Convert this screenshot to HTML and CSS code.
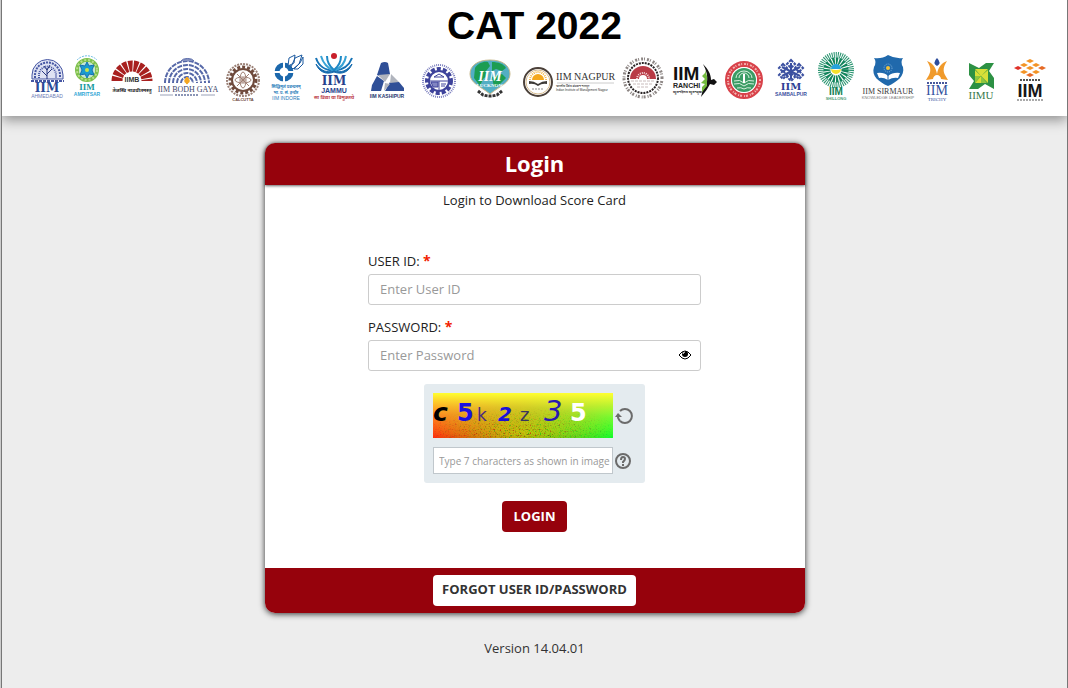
FILE: index.html
```html
<!DOCTYPE html>
<html lang="en">
<head>
    <meta charset="UTF-8">
    <meta name="viewport" content="width=device-width, initial-scale=1.0">
    <title>CAT 2022 - Login</title>
    <link rel="stylesheet" href="styles.css">
</head>
<body>
<header class="banner">
    <h1>CAT 2022</h1>
    <div class="logos">
        <!-- Ahmedabad -->
        <svg width="50" height="60" viewBox="0 0 50 60" fill="none" stroke="#4656a3">
            <path d="M13 31V27a15 15 0 0 1 31 0v4z" fill="#dfe3f3"/>
            <path d="M16 30v-3a12 12 0 0 1 25 0v3" stroke-width="2" stroke-dasharray="2 1"/>
            <path d="M20 30v-3a8 8 0 0 1 17 0v3" stroke-width="2" stroke-dasharray="1 1"/>
            <path d="M28 31V20m0 8l-5-5m5 3l5-5m-5 1l-3-4m3 4l3-5" stroke="#26357f"/>
            <path d="M12 33h33" stroke-width="2" stroke-dasharray="3 1"/>
            <text class="slab" x="28" y="44" font-size="12" fill="#2c4a97">IIM</text>
            <text class="sans" x="28" y="50" font-size="5" fill="#6d7db5">AHMEDABAD</text>
        </svg>
        <!-- Amritsar -->
        <svg width="36" height="60" viewBox="0 0 36 60" fill="none">
            <circle cx="18" cy="22" r="10" stroke="#7cc04b" stroke-width="4"/>
            <circle cx="18" cy="22" r="10" stroke="#b9dd8d" stroke-width="2" stroke-dasharray="2 2"/>
            <path d="M8 12a14 14 0 0 1 20 0" stroke="#6cbde3" stroke-dasharray="2 1"/>
            <circle cx="18" cy="22" r="8" fill="#bfe4d6"/>
            <path d="M18 14l2 4 5-1-2 5 2 5-5-1-2 4-2-4-5 1 2-5-2-5 5 1z" fill="#1b9bd0" stroke="#176fb0"/>
            <circle cx="18" cy="22" r="2" fill="#c9e34a"/>
            <text class="serif bold" x="18" y="42" font-size="9" fill="#169a9c">IIM</text>
            <text class="sans bold" x="18" y="48" font-size="5" fill="#35a7d6">AMRITSAR</text>
        </svg>
        <!-- Bangalore -->
        <svg width="51" height="60" viewBox="0 0 51 60" fill="none">
            <path d="M12 33a15 15 0 0 1 30 0" stroke="#a8201f" stroke-width="11" stroke-dasharray="4 1"/>
            <text class="sans bold" x="27" y="34" font-size="7" fill="#333">IIMB</text>
            <text class="hindi" x="27" y="44" font-size="5" fill="#222">तेजस्वि नावधीतमस्तु</text>
        </svg>
        <!-- Bodh Gaya -->
        <svg width="64" height="60" viewBox="0 0 64 60" fill="none" stroke="#5668a8">
            <path d="M9 35a22 22 0 0 1 44 0M13 35a18 18 0 0 1 36 0M17 35a14 14 0 0 1 28 0M21 35a10 10 0 0 1 20 0M25 35a6 6 0 0 1 12 0" stroke-width="2" stroke-dasharray="5 1"/>
            <path d="M25 13a7 4 0 0 1 13 0" fill="#8793c0"/>
            <path d="M31 29c3 3 3 5 0 7c-3-2-3-4 0-7z" fill="#f4a621" stroke="#f4a621"/>
            <text class="serif" x="32" y="44" font-size="8" fill="#43486b">IIM BODH GAYA</text>
            <path d="M4 47h13m28 0h14" stroke="#9aa1b8"/>
            <path d="M19 47h24" stroke="#8b95b5" stroke-width="2" stroke-dasharray="2 1"/>
        </svg>
        <!-- Calcutta -->
        <svg width="46" height="60" viewBox="0 0 46 60" fill="none" stroke="#6f4a3c">
            <circle cx="23" cy="32" r="16" stroke="#9b8177" stroke-width="2" stroke-dasharray="2 1"/>
            <circle cx="23" cy="32" r="13" stroke-width="3" stroke-dasharray="3 2"/>
            <circle cx="23" cy="32" r="11" stroke-width="2"/>
            <g stroke="#a08074">
                <circle cx="23" cy="32" r="2"/>
                <ellipse cx="23" cy="32" rx="8" ry="3"/>
                <ellipse cx="23" cy="32" rx="3" ry="8"/>
                <path d="M17 26l12 12m0-12L17 38"/>
            </g>
            <text class="sans bold" x="23" y="53" font-size="4" fill="#6f4a3c">CALCUTTA</text>
        </svg>
        <!-- Indore -->
        <svg width="43" height="60" viewBox="0 0 43 60" fill="none">
            <circle cx="18" cy="24" r="7" stroke="#1c68ac" stroke-width="5"/>
            <path d="M18 14v6m0 8v6M8 24h6m8 0h6" stroke="#fff" stroke-width="2"/>
            <path d="M22 18l1-8 6-3-1 8zM25 19l4-9 7-3-3 9-6 5zM28 21l6-6 3-6v7l-5 5z" fill="#fff" stroke="#1c5aa0"/>
            <text class="hindi" x="20" y="40" font-size="4" fill="#287bb9">सिद्धिमूलं प्रबन्धनम्</text>
            <text class="hindi" x="20" y="46" font-size="4" fill="#287bb9">भा. प्र. सं. इन्दौर</text>
            <text class="sans" x="20" y="52" font-size="5" fill="#287bb9">IIM INDORE</text>
        </svg>
        <!-- Jammu -->
        <svg width="52" height="60" viewBox="0 0 52 60" fill="none">
            <path d="M7 10c3 9 9 12 18 13c9-1 15-5 18-13" stroke="#1673b6" stroke-width="2"/>
            <path d="M12 8c2 7 6 12 13 15c7-3 11-8 12-15" stroke="#38a3d6" stroke-width="2"/>
            <path d="M18 8c0 6 2 10 7 14c5-4 7-8 7-14" stroke="#1e88c5" stroke-width="2"/>
            <path d="M7 16c5 7 11 9 18 7c7 2 13 0 18-7c-3 8-10 11-18 8c-8 3-15 0-18-8z" fill="#166bae" stroke="#166bae"/>
            <circle cx="25" cy="8" r="3" fill="#c9202b"/>
            <text class="slab" x="25" y="37" font-size="12" fill="#26418b">IIM</text>
            <text class="sans bold" x="25" y="45" font-size="7" fill="#26418b">JAMMU</text>
            <text class="hindi" x="25" y="51" font-size="5" fill="#bd3e48">सा विद्या या विमुक्तये</text>
        </svg>
        <!-- Kashipur -->
        <svg width="52" height="60" viewBox="0 0 52 60">
            <path d="M20 15q4-2 7 0l2 11-7 4-6-3z" fill="#2f4f97"/>
            <path d="M16 28l7 5-3 10H10l1-6z" fill="#2f4f97"/>
            <path d="M29 34l9 0 5 6v3H24z" fill="#2f4f97"/>
            <path d="M17 27l12-1-5 8zM30 26l8 8-9 1zM24 35l5 1-6 7z" fill="#b0b4bd"/>
            <text class="sans bold" x="26" y="50" font-size="5" fill="#26366f">IIM KASHIPUR</text>
        </svg>
        <!-- Kozhikode -->
        <svg width="51" height="60" viewBox="0 0 51 60" fill="none" stroke="#3e439b">
            <circle cx="26" cy="33" r="16" stroke="#7d80bf" stroke-width="2" stroke-dasharray="1 1"/>
            <circle cx="26" cy="33" r="12" stroke-width="4" stroke-dasharray="4 2"/>
            <circle cx="26" cy="33" r="10" fill="#fff" stroke-width="2"/>
            <path d="M17 33h18M26 33v9M21 29l5-3 5 3z"/>
            <path d="M18 34h7v5h-5z" fill="#8185c2"/>
            <path d="M28 36h5m-5 2h4"/>
        </svg>
        <!-- Lucknow -->
        <svg width="53" height="60" viewBox="0 0 53 60" fill="none">
            <path d="M26 12c13 0 20 6 20 14c0 9-10 12-20 20C16 38 6 35 6 26c0-8 7-14 20-14z" fill="#53aec4" stroke="#c9b98b"/>
            <path d="M11 20c3-5 9-7 13-6l2 4-4 5 2 4-5 4-3 7-6-8zM28 14c6 0 12 2 14 6l-4 3-6-2-4 2zM28 29l10-3 4 4-7 7-5 2z" fill="#1c9d52"/>
            <text class="serif bold italic" x="26" y="33" font-size="14" fill="#fff">IIM</text>
            <text class="serif bold" x="26" y="39" font-size="5" fill="#fff">LUCKNOW</text>
            <path d="M14 43l5 4q7 2 14 0l5-4" stroke="#333" stroke-width="3" stroke-dasharray="3 1"/>
        </svg>
        <!-- Nagpur -->
        <svg width="101" height="60" viewBox="0 0 101 60" fill="none">
            <circle cx="21" cy="34" r="14" stroke="#4b4039" stroke-width="2"/>
            <circle cx="21" cy="34" r="12" stroke="#d9bd8f"/>
            <path d="M15 32a6 6 0 0 1 12 0z" fill="#f4a81d"/>
            <path d="M13 32a8 8 0 0 1 16 0" stroke="#f4b640" stroke-width="2" stroke-dasharray="1 1"/>
            <path d="M12 33q5 0 9 3q4-3 9-3v3q-5-1-9 2q-4-3-9-2z" fill="#3d3a38"/>
            <path d="M15 41h12" stroke="#888" stroke-dasharray="2 1"/>
            <text class="serif start" x="39" y="32" font-size="10" fill="#333">IIM NAGPUR</text>
            <path d="M40 35h57" stroke="#ccc"/>
            <text class="hindi start" x="39" y="39" font-size="3" fill="#555">भारतीय प्रबंध संस्थान नागपुर</text>
            <text class="sans start" x="39" y="43" font-size="3" fill="#333">Indian Institute of Management Nagpur</text>
        </svg>
        <!-- Raipur -->
        <svg width="49" height="60" viewBox="0 0 49 60" fill="none">
            <circle cx="25" cy="30" r="19" stroke="#8d8684" stroke-width="3" stroke-dasharray="1 2 2 1"/>
            <circle cx="25" cy="30" r="15" stroke="#2b2526" stroke-width="2" stroke-dasharray="2 1"/>
            <path d="M12 31a13 13 0 0 1 26 0z" fill="#b93b46"/>
            <path d="M21 31a4 4 0 0 1 8 0z" fill="#fff"/>
            <path d="M19 31a6 6 0 0 1 12 0" stroke="#f2d7d9" stroke-width="2" stroke-dasharray="1 1"/>
            <path d="M13 33h24M15 36h20M19 39h12" stroke="#c9bcbc" stroke-dasharray="3 1"/>
        </svg>
        <!-- Ranchi -->
        <svg width="54" height="60" viewBox="0 0 54 60" fill="none">
            <text class="sans bold start" x="6" y="32" font-size="19" fill="#111">IIM</text>
            <text class="sans bold start" x="6" y="40" font-size="7" fill="#222">RANCHI</text>
            <text class="hindi start" x="6" y="45" font-size="3" fill="#333">बहुजनहिताय बहुजनसुखाय</text>
            <path d="M36 16c5 5 8 10 8 16l3-1 3 3-3 3-4-1c-3 6-5 8-9 13c1-6 4-10 6-15c1-7-1-12-4-18z" fill="#111"/>
            <path d="M38 22l2 6v10l-5 6v-5l3-3-4-1 4-4-3-3 3-3z" fill="#72ba3d"/>
        </svg>
        <!-- Rohtak -->
        <svg width="48" height="60" viewBox="0 0 48 60" fill="none">
            <circle cx="23" cy="32" r="16" stroke="#d8424a" stroke-width="6"/>
            <circle cx="23" cy="32" r="16" stroke="#f3b5b3" stroke-width="2" stroke-dasharray="1 2 2 1"/>
            <circle cx="23" cy="32" r="13" fill="#fff"/>
            <circle cx="23" cy="32" r="12" fill="#3b9c65"/>
            <path d="M15 30a8 7 0 0 1 16 0M18 30a5 5 0 0 1 10 0M13 33q6-2 10 2q4-4 10-2M13 36q6-2 10 2q4-4 10-2M16 40q4-1 7 1q3-2 7-1" stroke="#d8f0df"/>
            <path d="M23 26v9" stroke="#fff" stroke-width="2"/>
        </svg>
        <!-- Sambalpur -->
        <svg width="42" height="60" viewBox="0 0 42 60" fill="none">
            <g stroke="#3a4fa0" stroke-width="2">
                <path d="M22 12l4 4-4 4-4-4zM22 25l4 4-4 4-4-4zM14 16l4 4-4 4-4-4zM30 16l4 4-4 4-4-4zM14 23l4 4-4 4-4-4zM30 23l4 4-4 4-4-4z" stroke-dasharray="3 1"/>
                <path d="M22 15v16M13 19l18 9M31 19l-18 9"/>
            </g>
            <text class="slab" x="22" y="42" font-size="10" fill="#2f3f95">IIM</text>
            <text class="sans bold" x="22" y="48" font-size="5" fill="#3a4fa0">SAMBALPUR</text>
        </svg>
        <!-- Shillong -->
        <svg width="46" height="60" viewBox="0 0 46 60" fill="none">
            <circle cx="25" cy="22" r="15" stroke="#2c9672" stroke-width="6" stroke-dasharray="1 1"/>
            <circle cx="25" cy="22" r="9" stroke="#12845c" stroke-width="7" stroke-dasharray="2 1"/>
            <path d="M20 21a5 5 0 0 1 10 0z" fill="#26a3db"/>
            <path d="M20 21q5 2 10 0a5 5 0 0 1-10 0z" fill="#f6e12c"/>
            <text class="sans bold" x="25" y="47" font-size="10" fill="#138052">IIM</text>
            <text class="sans bold" x="25" y="52" font-size="4" fill="#4c9d79">SHILLONG</text>
        </svg>
        <!-- Sirmaur -->
        <svg width="63" height="60" viewBox="0 0 63 60" fill="none">
            <path d="M17 10q8 1 14-3q7 4 15 3q-3 4 0 9c2 9-6 15-15 19c-9-4-17-10-14-19q3-5 0-9z" fill="#2069ac"/>
            <path d="M20 25q7-1 11 3q5-4 12-3l-2 5q-5-1-10 2q-5-3-9-2z" fill="#fff"/>
            <path d="M31 27v5" stroke="#2069ac"/>
            <circle cx="31" cy="20" r="2" fill="#f3c23a"/>
            <circle cx="31" cy="20" r="4" stroke="#7fb2dc" stroke-dasharray="1 1"/>
            <text class="serif" x="31" y="46" font-size="8" fill="#3a3a3a">IIM SIRMAUR</text>
            <text class="sans" x="31" y="51" font-size="4" fill="#777">KNOWLEDGE LEADERSHIP</text>
        </svg>
        <!-- Trichy -->
        <svg width="38" height="60" viewBox="0 0 38 60" fill="none">
            <path d="M17 10q5 5 0 8q-5-3 0-8z" fill="#2c4c9c"/>
            <path d="M7 13c6 2 9 7 10 13c1-6 4-11 10-13c-4 6-4 10-2 14l3 5-7-1c0-2-2-4-4-4s-4 2-4 4l-7 1 3-5c2-4 2-8-2-14z" fill="#f09a2b"/>
            <path d="M7 35h21" stroke="#48589c" stroke-width="2" stroke-dasharray="2 1"/>
            <text class="serif" x="17" y="47" font-size="14" fill="#34539f">IIM</text>
            <text class="serif" x="17" y="53" font-size="5" fill="#34539f">TRICHY</text>
        </svg>
        <!-- Udaipur -->
        <svg width="47" height="60" viewBox="0 0 47 60">
            <path d="M11 15l10 5 7-5h8l-5 8 5 7v11l-9-5-7 5h-9l5-8-5-6z" fill="#2d9144"/>
            <path d="M17 21h6v7zM23 21h7l-7 7zM30 22v6h-7zM30 28v7l-7-7zM23 28h-6v-6zM23 28v7h-6z" fill="#d7df38"/>
            <path d="M17 28h6l-6 7zM23 28l6 7h-6z" fill="#8fc63f"/>
            <text class="serif" x="23" y="51" font-size="11" fill="#39794b">IIMU</text>
        </svg>
        <!-- Visakhapatnam -->
        <svg width="45" height="60" viewBox="0 0 45 60">
            <path d="M25 11l4 2-4 2-4-2zM19 15l4 2-4 2-4-2zM31 15l4 2-4 2-4-2zM25 18l4 2-4 2-4-2zM19 22l4 2-4 2-4-2zM31 22l4 2-4 2-4-2z" fill="#f39325"/>
            <path d="M13 18l4 2-4 2-4-2z" fill="#df3129"/>
            <path d="M37 18l4 2-4 2-4-2zM25 25l4 2-4 2-4-2z" fill="#e66a25"/>
            <path d="M15 32h20" stroke="#555" stroke-width="2" stroke-dasharray="2 1"/>
            <text class="sans bold" x="25" y="49" font-size="18" fill="#171717">IIM</text>
            <path d="M12 52h26" stroke="#aaa" stroke-width="2" stroke-dasharray="2 1"/>
        </svg>
    </div>
</header>

<main>
    <form class="card">
        <h2>Login</h2>
        <div class="card-body">
            <p class="intro">Login to Download Score Card</p>
            <div class="fields">
                <label for="userId">USER ID: <span class="required">*</span></label>
                <input type="text" id="userId" placeholder="Enter User ID">
                <label for="password">PASSWORD: <span class="required">*</span></label>
                <div class="password-box">
                    <input type="password" id="password" placeholder="Enter Password">
                    <button type="button" class="icon-btn show-password" aria-label="Show password">
                        <svg width="14" height="10" viewBox="0 0 14 10" fill="none">
                            <path d="M1 5q6-8 12 0q-6 8-12 0z" stroke="#000"/>
                            <circle cx="7" cy="4" r="3" fill="#000"/>
                            <path d="M5 4q0-2 2-2" stroke="#fff"/>
                        </svg>
                    </button>
                </div>
            </div>
            <div class="captcha">
                <svg class="captcha-image" width="180" height="45" viewBox="0 0 180 45">
                    <defs>
                        <linearGradient id="across">
                            <stop offset="0" stop-color="#ff1d10"/>
                            <stop offset="0.5" stop-color="#7d7d10"/>
                            <stop offset="1" stop-color="#00ff30"/>
                        </linearGradient>
                        <linearGradient id="down" x2="0" y2="1">
                            <stop offset="0" stop-color="#ffff30"/>
                            <stop offset="0.3" stop-color="#fff030" stop-opacity="0.7"/>
                            <stop offset="1" stop-color="#ffff30" stop-opacity="0"/>
                        </linearGradient>
                        <radialGradient id="fade" cx="0.5" cy="0.9" r="0.6">
                            <stop offset="0" stop-color="#fff"/>
                            <stop offset="1" stop-color="#000"/>
                        </radialGradient>
                        <mask id="grainMask"><rect width="180" height="45" fill="url(#fade)"/></mask>
                        <filter id="grain" x="0" y="0" width="1" height="1">
                            <feTurbulence type="fractalNoise" baseFrequency="0.8" numOctaves="2" seed="4"/>
                            <feColorMatrix values="4 0 0 0 -1  0 4 0 0 -1  0 0 0 0 0  0 0 0 0 0.5"/>
                        </filter>
                    </defs>
                    <rect width="180" height="45" fill="url(#across)"/>
                    <rect width="180" height="45" fill="url(#down)"/>
                    <g mask="url(#grainMask)"><rect width="180" height="45" filter="url(#grain)"/></g>
                    <g class="captcha-text">
                        <text x="0" y="28" font-size="25" class="bold italic" fill="#000">c</text>
                        <text x="24" y="28" font-size="24" class="bold" fill="#1a10e0">5</text>
                        <text x="44" y="28" font-size="17" fill="#4a2a80">k</text>
                        <text x="65" y="28" font-size="20" class="bold italic" fill="#1a10d8">2</text>
                        <text x="87" y="28" font-size="18" fill="#3a3560">z</text>
                        <text x="111" y="28" font-size="29" class="italic" fill="#2818b0">3</text>
                        <text x="137" y="28" font-size="24" class="bold" fill="#fff">5</text>
                    </g>
                </svg>
                <button type="button" class="icon-btn" aria-label="Refresh image">
                    <svg width="18" height="18" viewBox="0 0 18 18" fill="none" stroke="#6b6b6b" stroke-width="2">
                        <path d="M5 14a7 7 0 1 0 0-10"/>
                        <path d="M5 14a7 7 0 0 1-2-6"/>
                        <path d="M0 10l3-4 4 4z" fill="#6b6b6b" stroke="none"/>
                    </svg>
                </button>
                <input type="text" class="captcha-input" aria-label="Captcha" placeholder="Type 7 characters as shown in image">
                <button type="button" class="icon-btn" aria-label="Help">
                    <svg width="18" height="18" viewBox="0 0 18 18" fill="none" stroke="#6b6b6b" stroke-width="2">
                        <circle cx="8" cy="9" r="7"/>
                        <path d="M6 8q0-3 2-3t2 2q0 1-2 3v1M8 12v2"/>
                    </svg>
                </button>
            </div>
            <button type="submit" class="btn btn-login">LOGIN</button>
        </div>
        <div class="card-footer">
            <button type="button" class="btn btn-forgot">FORGOT USER ID/PASSWORD</button>
        </div>
    </form>
    <p class="version">Version 14.04.01</p>
</main>
</body>
</html>
```

FILE: styles.css
```css
* {
    box-sizing: border-box;
}
html {
    border-left: 1px solid #ccc;
}
body {
    margin: 0;
    min-height: 100vh;
    border-left: 1px solid #777;
    border-right: 1px solid #777;
    background-color: #ededed;
    color: #333;
    font-family: "Open Sans", sans-serif;
    font-size: 13px;
    line-height: 18px;
}
h1, h2, p {
    margin: 0;
}
.banner {
    padding: 4px 0 8px;
    background-color: #fff;
    box-shadow: 0 4px 12px rgba(0, 0, 0, 0.4);
}
.banner h1 {
    color: #000;
    font-family: "Liberation Sans", Arial, sans-serif;
    font-size: 39px;
    line-height: 44px;
    text-align: center;
}
.logos {
    display: flex;
    justify-content: center;
}
.logos svg {
    flex: none;
}
.logos text {
    stroke: none;
    text-anchor: middle;
}
.logos .start {
    text-anchor: start;
}
.sans {
    font-family: "Liberation Sans", Arial, sans-serif;
}
.serif {
    font-family: "Liberation Serif", "Times New Roman", serif;
}
.slab {
    font-family: "DejaVu Serif", serif;
    font-weight: bold;
}
.hindi {
    font-family: "Noto Sans", sans-serif;
    font-weight: bold;
}
.bold {
    font-weight: bold;
}
.italic {
    font-style: italic;
}
main {
    padding: 27px 16px 24px;
}
.card {
    max-width: 540px;
    margin: 0 auto;
    border-radius: 10px;
    background-color: #fff;
    box-shadow: 0 1px 6px rgba(0, 0, 0, 0.8);
}
.card h2 {
    padding-bottom: 2px;
    border-radius: 10px 10px 0 0;
    background-color: #96020c;
    box-shadow: 0 1px 3px rgba(0, 0, 0, 0.6);
    color: #fff;
    font-size: 22px;
    line-height: 40px;
    text-align: center;
}
.card-body {
    display: flex;
    flex-direction: column;
    align-items: center;
    padding: 6px 16px 36px;
}
.intro {
    margin-bottom: 43px;
    color: #222;
    font-weight: 500;
}
.fields {
    display: flex;
    flex-direction: column;
    width: 100%;
    max-width: 333px;
}
.fields label {
    margin-bottom: 4px;
    color: #222;
    font-weight: 500;
}
.fields > input {
    margin-bottom: 13px;
}
.required {
    color: #f21d00;
    font-size: 14px;
    font-weight: bold;
    line-height: 18px;
}
input {
    width: 100%;
    height: 31px;
    padding: 0 11px 2px;
    border: 1px solid #ccc;
    border-radius: 3px;
    background-color: #fff;
    font-family: inherit;
    font-size: 13px;
}
input::placeholder {
    color: #999;
}
.password-box {
    position: relative;
}
.icon-btn {
    display: flex;
    padding: 0;
    border: 0;
    background: none;
    cursor: pointer;
}
.show-password {
    position: absolute;
    top: 10px;
    right: 9px;
}
.captcha {
    display: grid;
    grid-template-columns: 180px 18px;
    align-items: center;
    gap: 9px 2px;
    width: 221px;
    margin: 13px 0 18px;
    padding: 9px;
    border-radius: 3px;
    background-color: #e4ebef;
}
.captcha-image {
    display: block;
}
.captcha-text {
    font-family: "DejaVu Sans", sans-serif;
}
.captcha-input {
    height: 27px;
    padding: 0 0 0 5px;
    border-color: #c0c7cc;
    border-radius: 0;
    font-size: 10px;
}
.btn {
    height: 31px;
    padding: 0 12px 2px;
    border: 0;
    border-radius: 4px;
    font-family: inherit;
    font-size: 13px;
    font-weight: bold;
    cursor: pointer;
}
.btn-login {
    background-color: #96020c;
    color: #fff;
}
.card-footer {
    display: flex;
    justify-content: center;
    padding: 7px;
    border-radius: 0 0 10px 10px;
    background-color: #96020c;
}
.btn-forgot {
    padding: 0 9px 4px;
    background-color: #fff;
    color: #333;
}
.version {
    margin-top: 26px;
    text-align: center;
}
```
